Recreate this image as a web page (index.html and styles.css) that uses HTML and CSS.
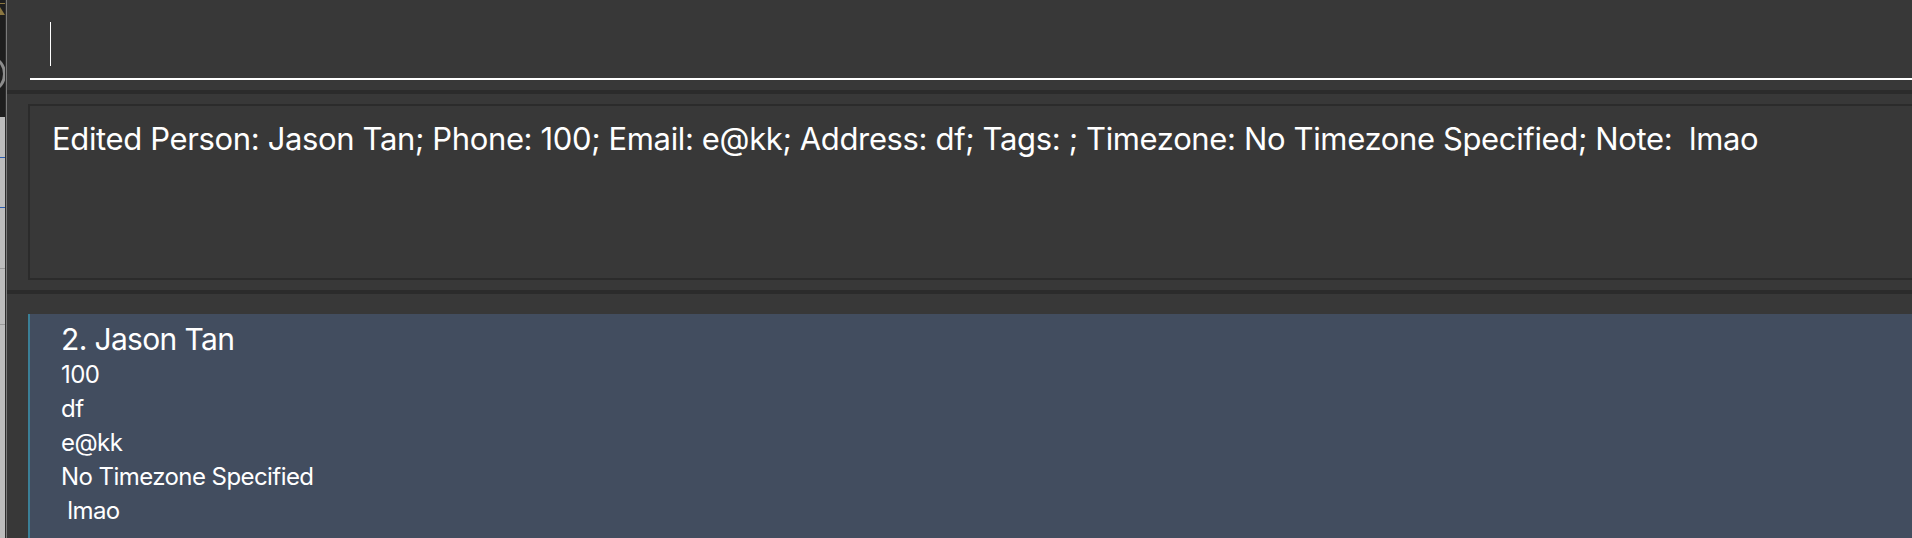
FILE: index.html
```html
<!DOCTYPE html>
<html>
<head>
<meta charset="utf-8">
<link rel="stylesheet" href="styles.css">
</head>
<body>
<div class="screen">
  <div class="side-window">
    <div class="side-top">
      <div class="gold-bar"></div>
      <div class="gold-tri"></div>
      <div class="side-ring"></div>
    </div>
    <div class="side-bottom">
      <div class="blue-line b1"></div>
      <div class="blue-line b2"></div>
      <div class="gray-line g1"></div>
      <div class="gray-line g2"></div>
    </div>
  </div>
  <div class="divider"></div>
  <div class="app">
    <div class="command-area">
      <div class="command-field"><span class="caret"></span></div>
    </div>
    <div class="sep"></div>
    <div class="result-area">
      <div class="result-box">
        <p class="result-text">Edited Person: Jason Tan; Phone: 100; Email: e@kk; Address: df; Tags: ; Timezone: No Timezone Specified; Note:  lmao</p>
      </div>
    </div>
    <div class="sep"></div>
    <div class="list-area">
      <div class="card">
        <div class="card-title">2. Jason Tan</div>
        <div class="card-line">100</div>
        <div class="card-line">df</div>
        <div class="card-line">e@kk</div>
        <div class="card-line">No Timezone Specified</div>
        <div class="card-line"> lmao</div>
      </div>
    </div>
  </div>
</div>
</body>
</html>
```

FILE: styles.css
```css
html, body {
  margin: 0;
  padding: 0;
  width: 1912px;
  height: 538px;
  overflow: hidden;
  background: #383838;
}

.screen {
  display: flex;
  width: 1912px;
  height: 538px;
  font-family: "Inter", "Liberation Sans", sans-serif;
  color: #ffffff;
}

.side-window {
  width: 5px;
  display: flex;
  flex-direction: column;
  flex: none;
}

.side-top {
  height: 117px;
  background: #1e1e1e;
  position: relative;
  overflow: hidden;
}

.gold-bar {
  position: absolute;
  left: 0;
  top: 3px;
  width: 5px;
  height: 1px;
  background: #8a7640;
}

.gold-tri {
  position: absolute;
  left: 0;
  top: 7px;
  width: 0;
  height: 0;
  border-left: 5px solid #8a7640;
  border-top: 8px solid transparent;
}

.side-ring {
  position: absolute;
  left: -18px;
  top: 58px;
  width: 18px;
  height: 26px;
  border: 3px solid #8c8c8c;
  border-radius: 50%;
}

.side-bottom {
  flex: 1;
  background: #bdbdbd;
  position: relative;
}

.blue-line {
  position: absolute;
  left: 0;
  width: 5px;
  height: 1px;
  background: #2a5db0;
}

.b1 { top: 40px; }
.b2 { top: 90px; }

.gray-line {
  position: absolute;
  left: 0;
  width: 5px;
  height: 1px;
  background: #9a9a9a;
}

.g1 { top: 151px; }
.g2 { top: 207px; }

.divider {
  width: 2px;
  flex: none;
  background: linear-gradient(to right, #2e2e2e 50%, #7a7a7a 50%);
}

.app {
  flex: 1;
  display: flex;
  flex-direction: column;
  overflow: hidden;
  background: #383838;
}

.command-area {
  height: 90px;
  padding: 14px 0 0 23px;
  box-sizing: border-box;
  flex: none;
}

.command-field {
  border-bottom: 2px solid #ffffff;
  padding: 8px 0 0 20px;
  box-sizing: content-box;
  margin-right: -10px;
  height: 56px;
}

.caret {
  display: block;
  width: 1px;
  height: 44px;
  background: #ffffff;
}

.sep {
  height: 4px;
  background: #2b2b2b;
  flex: none;
}

.result-area {
  height: 196px;
  padding: 10px 0 10px 21px;
  box-sizing: border-box;
  flex: none;
}

.result-box {
  height: 100%;
  box-sizing: border-box;
  border: 2px solid #2b2b2b;
  margin-right: -10px;
  padding: 14px 0 0 22px;
}

.result-text {
  margin: 0;
  font-size: 31px;
  line-height: 38px;
  letter-spacing: -0.36px;
  white-space: pre;
  color: #ffffff;
}

.list-area {
  flex: 1;
  padding: 20px 0 0 21px;
  box-sizing: border-box;
}

.card {
  height: 100%;
  background: #424d5f;
  border-left: 2px solid #3b7f96;
  margin-right: -10px;
  padding: 7px 0 0 31px;
  box-sizing: border-box;
}

.card-title {
  font-size: 30px;
  line-height: 37px;
  letter-spacing: -0.65px;
  white-space: pre;
}

.card-line {
  font-size: 24px;
  line-height: 34px;
  letter-spacing: -0.57px;
  white-space: pre;
}
```
